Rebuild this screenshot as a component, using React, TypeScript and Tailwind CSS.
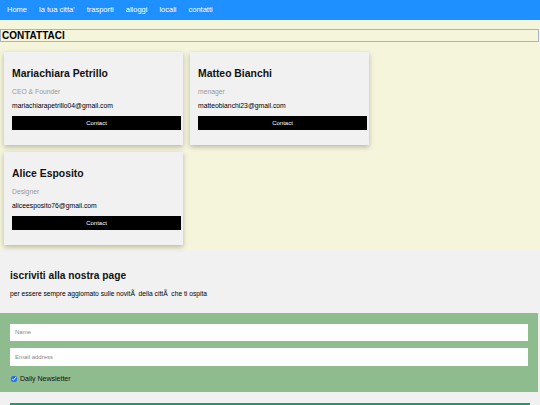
const links = ["Home", "la tua citta'", "trasporti", "alloggi", "locali", "contatti"];

const people = [
  { name: "Mariachiara Petrillo", role: "CEO & Founder", email: "mariachiarapetrillo04@gmail.com" },
  { name: "Matteo Bianchi", role: "menager", email: "matteobianchi23@gmail.com" },
  { name: "Alice Esposito", role: "Designer", email: "aliceesposito76@gmail.com" },
];

function Card({ name, role, email }: { name: string; role: string; email: string }) {
  return (
    <div className="bg-[#f1f1f1] shadow-[0_2px_5px_rgba(0,0,0,0.25)] pl-[8px] pr-[2px] pt-[15px] pb-[15px] leading-none">
      <h2 className="text-[10.4px] font-bold leading-[14px] text-[#111]">{name}</h2>
      <p className="mt-[6px] text-[6.8px] leading-[10px] text-[#999]">{role}</p>
      <p className="mt-[4px] text-[6.8px] leading-[10px] text-black">{email}</p>
      <button className="block mt-[5px] w-full h-[14px] bg-black text-white text-[6px] leading-[14px] text-center">
        Contact
      </button>
    </div>
  );
}

export default function App() {
  return (
    <div className="w-[540px] h-[405px] overflow-hidden bg-[#f1f1f1] font-['Liberation_Sans',Arial,sans-serif]">
      <nav className="h-[20px] bg-[#1e90ff] flex items-center pl-[1px]">
        {links.map((l) => (
          <a key={l} className="px-[6px] text-[7.5px] text-white leading-[20px]">
            {l}
          </a>
        ))}
      </nav>

      <section className="bg-[#f5f5dc] pt-[9px] pb-[5px]">
        <h1 className="h-[13px] border border-[#a3b5cc] pl-[1px] mr-[1px] text-[10px] font-bold leading-[11px] text-black">
          CONTATTACI
        </h1>
        <div className="grid grid-cols-[179px_179px] gap-[7px] pl-[4px] mt-[10px]">
          {people.map((p) => (
            <Card key={p.name} {...p} />
          ))}
        </div>
      </section>

      <section className="pt-[20px] leading-none">
        <h3 className="pl-[10px] text-[10.2px] font-bold leading-[12px] text-[#111]">iscriviti alla nostra page</h3>
        <p className="pl-[10px] mt-[8px] text-[6.7px] leading-[8px] text-black">
          per essere sempre aggiomato sulle novitÃ{"\u00a0"} della cittÃ{"\u00a0"} che ti ospita
        </p>
        <div className="mt-[15px] mr-[2px] bg-[#8fbc8f] px-[10px] pt-[11px] pb-[8px]">
          <div className="h-[17px] bg-white pl-[5px] text-[6px] leading-[17px] text-[#888]">Name</div>
          <div className="mt-[7px] h-[18px] bg-white pl-[5px] text-[6px] leading-[18px] text-[#888]">Email address</div>
          <label className="mt-[8px] h-[10px] flex items-center gap-[3px] pl-[1px] text-[7px] leading-[10px] text-[#111]">
            <input type="checkbox" defaultChecked className="m-0 w-[6px] h-[6px] accent-[#1a73e8]" />
            Daily Newsletter
          </label>
        </div>
        <div className="mt-[11px] mx-[10px] h-[20px] bg-[#13a070]"></div>
      </section>
    </div>
  );
}
